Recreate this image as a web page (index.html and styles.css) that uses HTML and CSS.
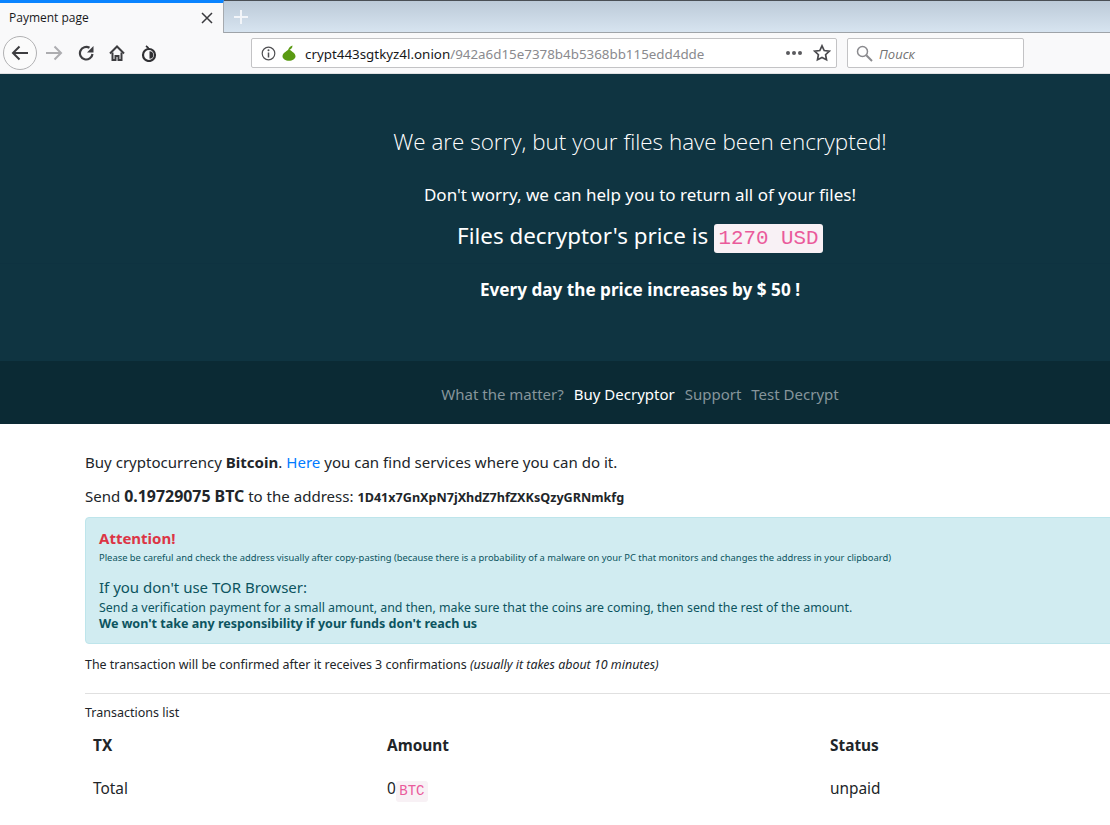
FILE: index.html
```html
<!DOCTYPE html>
<html lang="en">
<head>
<meta charset="utf-8">
<title>Payment page</title>
<link rel="stylesheet" href="styles.css">
</head>
<body>
<div class="browser">
  <div class="tabbar">
    <div class="tab"><span class="tab-title">Payment page</span>
      <svg class="tab-close" width="12" height="12" viewBox="0 0 12 12"><path d="M1 1l10 10M11 1L1 11" stroke="#3a3a3e" stroke-width="1.5" fill="none"/></svg>
    </div>
    <svg class="newtab" width="16" height="16" viewBox="0 0 16 16"><path d="M8 1v14M1 8h14" stroke="#f2f5f9" stroke-width="2" fill="none"/></svg>
  </div>
  <div class="toolbar">
    <div class="back"><svg width="18" height="16" viewBox="0 0 18 16"><path d="M17 8H2M8.500 1.500L2 8l6.500 6.500" stroke="#3d3d40" stroke-width="2" fill="none"/></svg></div>
    <svg class="forward" width="18" height="16" viewBox="0 0 18 16"><path d="M1 8h15M9.500 1.500L16 8l-6.500 6.500" stroke="#adadb0" stroke-width="2" fill="none"/></svg>
    <svg class="reload" width="16" height="16" viewBox="0 0 16 16"><path d="M14.500 9A6.300 6.300 0 1 1 11.500 2.800" stroke="#3d3d40" stroke-width="2.200" fill="none"/><path d="M15.500 1v6.500H9z" fill="#3d3d40"/></svg>
    <svg class="home" width="16" height="16" viewBox="0 0 16 16"><path d="M1 8.500L8 1.500l7 7" stroke="#3d3d40" stroke-width="2" fill="none"/><path d="M3.500 7.500V15h3v-4h3v4h3V7.500" stroke="#3d3d40" stroke-width="2" fill="none"/></svg>
    <svg class="onion" width="16" height="17" viewBox="0 0 16 17"><circle cx="8" cy="10" r="6" stroke="#2f2f32" stroke-width="2.200" fill="none"/><path d="M8.500 6.200a3.800 3.800 0 0 1 0 7.600z" fill="#2f2f32"/><path d="M8 4.500C8 3 6.500 2 5 1" stroke="#2f2f32" stroke-width="1.800" fill="none"/></svg>
    <div class="urlbar">
      <svg class="info" width="15" height="15" viewBox="0 0 15 15"><circle cx="7.500" cy="7.500" r="6.300" stroke="#4f4f52" stroke-width="1.200" fill="none"/><path d="M7.500 6.500v5" stroke="#4f4f52" stroke-width="1.500"/><circle cx="7.500" cy="4.300" r="1" fill="#4f4f52"/></svg>
      <svg class="pear" width="14" height="16" viewBox="0 0 14 16"><path d="M7 3.500c1 2.500 6.500 4 6.500 7.800C13.500 14 10.500 15.800 7 15.800S.5 14 .5 11.300C.5 7.500 6 6 7 3.500z" fill="#5a9a12"/><path d="M6.500 5C6.500 3 8 1 10.500.5c0 2.500-1.500 4-4 4.500z" fill="#5a9a12"/></svg>
      <span class="url"><span class="host">crypt443sgtkyz4l.onion</span><span class="path">/942a6d15e7378b4b5368bb115edd4dde</span></span>
      <span class="dots"><i></i><i></i><i></i></span>
      <svg class="star" width="18" height="18" viewBox="0 0 18 18"><path d="M9 1.800l2.200 4.700 5.100.7-3.700 3.500.9 5.100L9 13.400l-4.500 2.400.9-5.100-3.700-3.500 5.100-.7z" stroke="#4a4a4e" stroke-width="1.700" fill="none"/></svg>
    </div>
    <div class="searchbar">
      <svg width="17" height="17" viewBox="0 0 17 17"><circle cx="6.500" cy="6.500" r="5" stroke="#8a8a8e" stroke-width="1.500" fill="none"/><path d="M10.300 10.300L16 16" stroke="#8a8a8e" stroke-width="2"/></svg>
      <span class="search-text">Поиск</span>
    </div>
  </div>
</div>
<div class="page">
  <header class="hero">
    <h1 class="hero-title">We are sorry, but your files have been encrypted!</h1>
    <p class="hero-sub">Don't worry, we can help you to return all of your files!</p>
    <p class="hero-price">Files decryptor's price is <code class="price">1270 USD</code></p>
    <p class="hero-inc">Every day the price increases by $ 50 !</p>
  </header>
  <nav class="nav">
    <a class="nav-link">What the matter?</a>
    <a class="nav-link active">Buy Decryptor</a>
    <a class="nav-link">Support</a>
    <a class="nav-link">Test Decrypt</a>
  </nav>
  <main class="container">
    <p class="line">Buy cryptocurrency <b>Bitcoin</b>. <a class="link">Here</a> you can find services where you can do it.</p>
    <p class="line last">Send <b class="amt">0.19729075 BTC</b> to the address: <b class="addr">1D41x7GnXpN7jXhdZ7hfZXKsQzyGRNmkfg</b></p>
    <div class="alert">
      <h4 class="alert-head">Attention!</h4>
      <p class="alert-small">Please be careful and check the address visually after copy-pasting (because there is a probability of a malware on your PC that monitors and changes the address in your clipboard)</p>
      <h5 class="alert-sub">If you don't use TOR Browser:</h5>
      <p class="alert-text first">Send a verification payment for a small amount, and then, make sure that the coins are coming, then send the rest of the amount.</p>
      <p class="alert-text"><b>We won't take any responsibility if your funds don't reach us</b></p>
    </div>
    <p class="confirm">The transaction will be confirmed after it receives 3 confirmations <i>(usually it takes about 10 minutes)</i></p>
    <hr class="rule">
    <p class="tx-label">Transactions list</p>
    <table class="tx">
      <tr><th class="c1">TX</th><th class="c2">Amount</th><th>Status</th></tr>
      <tr><td>Total</td><td>0<code class="btc">BTC</code></td><td>unpaid</td></tr>
    </table>
  </main>
</div>
</body>
</html>
```
FILE: styles.css
```css
html, body { margin: 0; padding: 0; }
body { width: 1110px; height: 825px; overflow: hidden; background: #fff; font-family: "Noto Sans", "Open Sans", sans-serif; color: #212529; }

.browser { height: 74px; background: #f9f9fa; font-family: "Open Sans", sans-serif; }
.tabbar { height: 33px; display: flex; align-items: center; background: linear-gradient(#bccad8, #d7e4f0); border-top: 1px solid #4a4f55; border-bottom: 1px solid #9ea3a8; box-sizing: border-box; position: relative; }
.tab { width: 224px; height: 33px; margin-top: -1px; box-sizing: border-box; background: #f9f9fa; border-top: 3px solid #0a84ff; border-right: 1px solid #a6aaaf; display: flex; align-items: center; justify-content: space-between; padding: 0 10px 0 9px; position: relative; z-index: 1; }
.tab-title { font-size: 12px; color: #18181a; }
.newtab { margin-left: 9px; }
.toolbar { height: 41px; display: flex; align-items: center; border-bottom: 1px solid #e0e0e2; box-sizing: border-box; position: relative; }
.back { width: 34px; height: 34px; box-sizing: border-box; margin-left: 3px; border: 1px solid #b1b1b3; border-radius: 50%; background: #fbfbfb; display: flex; align-items: center; justify-content: center; flex: none; }
.forward { margin-left: 8px; flex: none; }
.reload { margin-left: 15px; flex: none; }
.home { margin-left: 15px; flex: none; }
.onion { margin-left: 16px; flex: none; }
.urlbar { margin-left: 94px; width: 586px; height: 30px; box-sizing: border-box; background: #fff; border: 1px solid #c3c3c5; border-radius: 2px; display: flex; align-items: center; flex: none; padding: 0 5px 0 9px; }
.info { flex: none; }
.pear { margin-left: 6px; flex: none; }
.url { margin-left: 9px; padding-top: 1px; font-size: 13.370px; white-space: nowrap; flex: 1; font-family: "Noto Sans", sans-serif; }
.host { color: #18181a; }
.path { color: #8a8a8e; }
.dots { display: flex; gap: 2px; margin-right: 11px; }
.dots i { width: 4px; height: 4px; border-radius: 50%; background: #5a5a5e; }
.searchbar { margin-left: 10px; width: 177px; height: 30px; box-sizing: border-box; background: #fff; border: 1px solid #c3c3c5; border-radius: 2px; display: flex; align-items: center; padding: 0 8px; gap: 6px; flex: none; }
.search-text { padding-top: 1px; font-size: 13px; font-style: italic; color: #737373; }

.page { width: 1280px; }
.hero { height: 287px; box-sizing: border-box; background: #0f3441; color: #fff; text-align: center; padding-top: 51px; position: relative; }
.hero::after { content: ""; position: absolute; left: 0; right: 0; top: 189px; border-top: 1px solid #0e3240; }
.hero-title { margin: 0; font-size: 22.450px; font-weight: 300; line-height: 34px; font-family: "Open Sans", sans-serif; }
.hero-sub { margin: 23px 0 0; font-size: 17px; line-height: 26px; }
.hero-price { margin: 10px 0 0; font-size: 22.400px; line-height: 36px; }
.price { display: inline-block; font-family: "Liberation Mono", monospace; font-size: 20.800px; line-height: 29px; padding: 0 4.500px; color: #ea5a9b; background: #f8f1f5; border-radius: 3px; vertical-align: 0; }
.hero-inc { margin: 22px 0 0; font-size: 17.150px; line-height: 28px; font-weight: 700; }

.nav { height: 63px; box-sizing: border-box; padding-top: 2px; background: #0b2a34; display: flex; justify-content: center; align-items: center; gap: 10px; font-size: 15px; }
.nav-link { color: #86959b; }
.nav-link.active { color: #fff; }

.container { margin-left: 85px; width: 1110px; padding-top: 26px; font-size: 15.060px; }
.line { margin: 0 0 10px; line-height: 24px; }
.line.last { margin-bottom: 7px; }
.link { color: #007bff; }
.amt { font-size: 15.900px; }
.addr { font-size: 12.600px; }
.alert { height: 127px; box-sizing: border-box; background: #d1ecf1; border: 1px solid #bee5eb; border-radius: 4px; padding: 10px 13px; color: #0c5460; }
.alert-head { margin: 0; font-size: 15px; line-height: 20px; font-weight: 700; color: #dc3545; }
.alert-small { margin: 3px 0 0; font-size: 9.380px; line-height: 13px; }
.alert-sub { margin: 13px 0 0; font-size: 15px; line-height: 20px; font-weight: 400; }
.alert-text { margin: 0; font-size: 12.370px; line-height: 16px; }
.alert-text.first { margin-top: 3px; }
.alert-text b { font-size: 12.550px; }
.confirm { margin: 12px 0 0; font-size: 12.430px; line-height: 18px; }
.rule { margin: 19px 0 0; border: 0; border-top: 1px solid #e0e0e0; }
.tx-label { margin: 10px 0 0; font-size: 12.500px; line-height: 18px; }
.tx { width: 100%; border-collapse: collapse; table-layout: fixed; margin-top: 2px; }
.tx th, .tx td { text-align: left; padding: 11px 8px; line-height: 22px; font-size: 15.400px; }
.tx td { padding-top: 10px; }
.c1 { width: 278px; }
.c2 { width: 427px; }
.btc { display: inline-block; font-family: "Liberation Mono", monospace; font-size: 14px; line-height: 21px; margin: -3px 0; color: #ea5a9b; background: #f8f1f5; border-radius: 3px; padding: 0 3.500px; vertical-align: -1px; }
```
